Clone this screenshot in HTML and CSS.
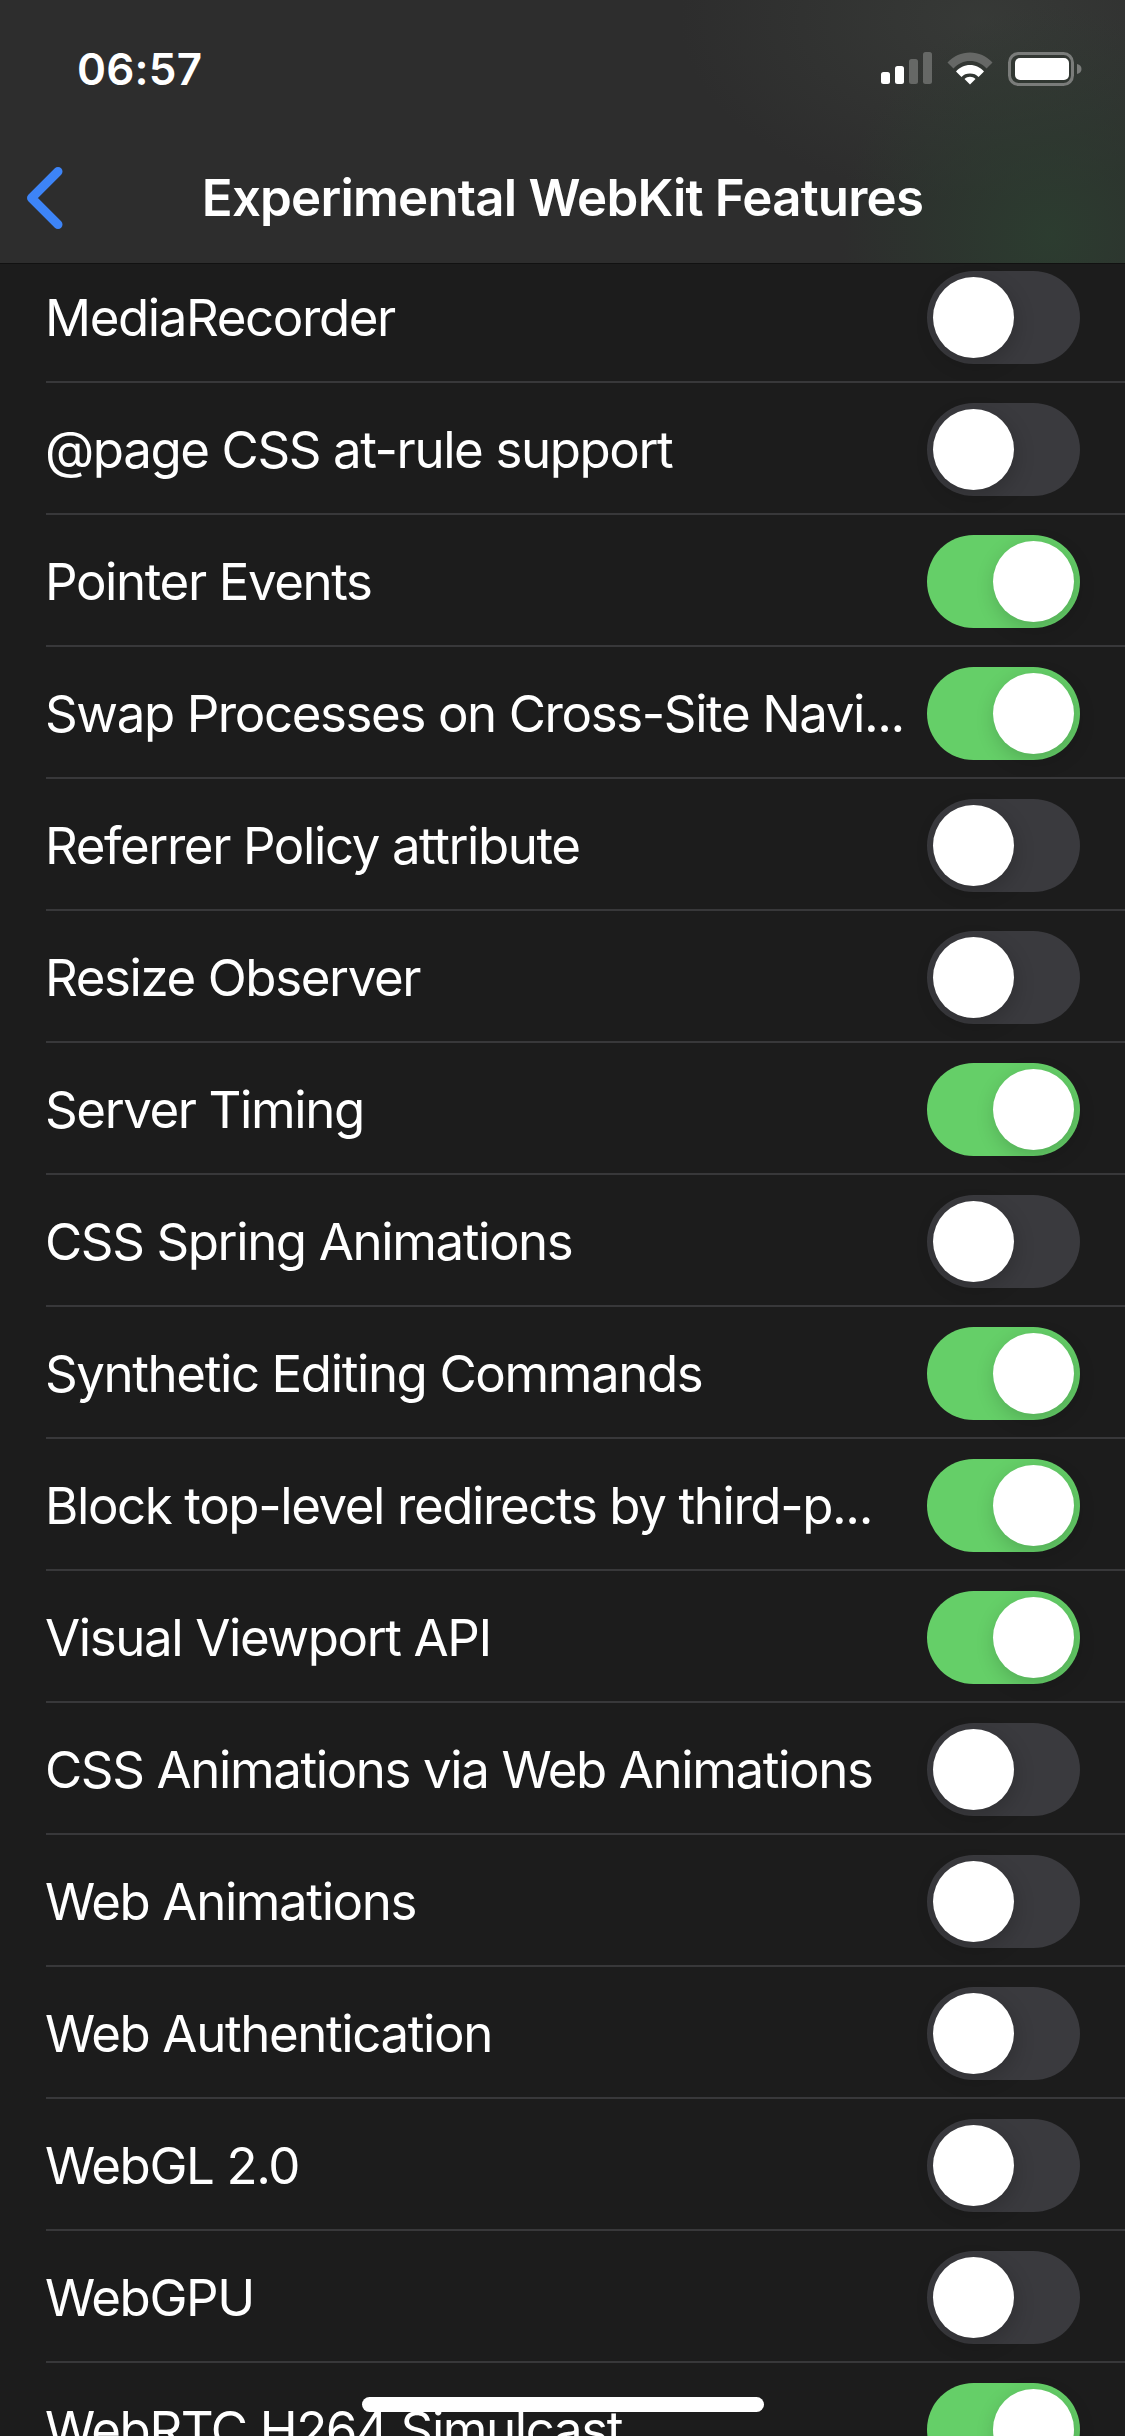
FILE: index.html
```html
<!DOCTYPE html>
<html lang="en">
<head>
<meta charset="utf-8">
<title>Experimental WebKit Features</title>
<link rel="stylesheet" href="styles.css">
</head>
<body>
<div class="screen">
  <header class="header">
    <div class="status">
      <span class="time">06:57</span>
      <div class="status-icons">
        <svg class="signal" width="51" height="32" viewBox="0 0 51 32">
          <rect x="0" y="20" width="9" height="12" rx="2.5" fill="#fff"/>
          <rect x="14" y="14" width="9" height="18" rx="2.5" fill="#fff"/>
          <rect x="28" y="7" width="9" height="25" rx="2.5" fill="#666866"/>
          <rect x="42" y="0" width="9" height="32" rx="2.5" fill="#666866"/>
        </svg>
        <svg class="wifi" width="46" height="33" viewBox="0 0 46 33">
          <path d="M0.5 10.5C6.5 4 14.5 0.5 23 0.5s16.500 3.500 22.500 10l-6 6C35 11.500 29.500 9 23 9S11 11.500 6.500 16.500Z" fill="#666866"/>
          <path d="M9 19.500C12.500 15.500 17.500 13 23 13s10.500 2.500 14 6.500l-5.500 5.500C29.500 22.500 26.500 21.500 23 21.500S16.500 22.500 14.500 25Z" fill="#fff"/>
          <path d="M17.500 27C19 25.500 21 24.800 23 24.800S27 25.500 28.500 27L23 32.500Z" fill="#fff"/>
        </svg>
        <svg class="battery" width="74" height="34" viewBox="0 0 74 34">
          <rect x="1.500" y="1.500" width="63" height="31" rx="9" fill="none" stroke="#7a7c7a" stroke-width="3"/>
          <rect x="7" y="6" width="54" height="22" rx="5" fill="#fff"/>
          <path d="M69 12c3 .6 4.500 2.500 4.500 5s-1.500 4.400-4.500 5Z" fill="#7a7c7a"/>
        </svg>
      </div>
    </div>
    <nav class="nav">
      <svg class="back" width="36" height="64" viewBox="0 0 36 64">
        <path d="M31 5.500 4.500 32 31 58.500" fill="none" stroke="#3d84f7" stroke-width="9" stroke-linecap="round" stroke-linejoin="round"/>
      </svg>
      <h1 class="title">Experimental WebKit Features</h1>
    </nav>
  </header>
  <ul class="list">
    <li class="row"><span class="label">MediaRecorder</span><span class="switch"></span></li>
    <li class="row"><span class="label">@page CSS at-rule support</span><span class="switch"></span></li>
    <li class="row"><span class="label">Pointer Events</span><span class="switch on"></span></li>
    <li class="row"><span class="label">Swap Processes on Cross-Site Navi...</span><span class="switch on"></span></li>
    <li class="row"><span class="label">Referrer Policy attribute</span><span class="switch"></span></li>
    <li class="row"><span class="label">Resize Observer</span><span class="switch"></span></li>
    <li class="row"><span class="label">Server Timing</span><span class="switch on"></span></li>
    <li class="row"><span class="label">CSS Spring Animations</span><span class="switch"></span></li>
    <li class="row"><span class="label">Synthetic Editing Commands</span><span class="switch on"></span></li>
    <li class="row"><span class="label">Block top-level redirects by third-p...</span><span class="switch on"></span></li>
    <li class="row"><span class="label">Visual Viewport API</span><span class="switch on"></span></li>
    <li class="row"><span class="label">CSS Animations via Web Animations</span><span class="switch"></span></li>
    <li class="row"><span class="label">Web Animations</span><span class="switch"></span></li>
    <li class="row"><span class="label">Web Authentication</span><span class="switch"></span></li>
    <li class="row"><span class="label">WebGL 2.0</span><span class="switch"></span></li>
    <li class="row"><span class="label">WebGPU</span><span class="switch"></span></li>
    <li class="row"><span class="label">WebRTC H264 Simulcast</span><span class="switch on"></span></li>
  </ul>
  <div class="home-indicator"></div>
</div>
</body>
</html>
```
FILE: styles.css
```css
* { box-sizing: border-box; }
html, body { margin: 0; padding: 0; background: #1c1c1c; }
.screen {
  position: relative;
  width: 1125px;
  height: 2436px;
  overflow: hidden;
  background: #1c1c1c;
  color: #fff;
  font-family: Inter, "Liberation Sans", sans-serif;
}
.header {
  position: relative;
  z-index: 2;
  height: 264px;
  display: flex;
  flex-direction: column;
  background:
    radial-gradient(ellipse 210px 230px at 1050px 235px, rgba(44,62,48,.9), rgba(44,62,48,0) 100%),
    radial-gradient(ellipse 300px 180px at 980px 20px, rgba(60,64,60,.65), rgba(60,64,60,0) 100%),
    #2d2d2d;
  border-bottom: 1px solid #111;
}
.status {
  height: 132px;
  padding: 47px 43px 0 77px;
  display: flex;
  justify-content: space-between;
  align-items: flex-start;
}
.time {
  font-size: 44px;
  font-weight: 600;
  line-height: 44px;
  letter-spacing: 0.2px;
}
.status-icons {
  display: flex;
  align-items: flex-start;
  gap: 15px;
  padding-top: 5px;
}
.nav {
  position: relative;
  flex: 1;
  display: flex;
  align-items: center;
  justify-content: center;
}
.back {
  position: absolute;
  left: 27px;
  top: 34px;
}
.title {
  margin: 0;
  font-size: 51px;
  font-weight: 600;
  line-height: 60px;
  letter-spacing: -0.8px;
  white-space: nowrap;
}
.list {
  list-style: none;
  margin: -13px 0 0;
  padding: 0;
}
.row {
  position: relative;
  height: 132px;
  padding: 1px 45px 0 45px;
  display: flex;
  align-items: center;
  justify-content: space-between;
}
.row::after {
  content: "";
  position: absolute;
  left: 46px;
  right: 0;
  bottom: 0;
  height: 2px;
  background: #38383a;
}
.label {
  font-size: 51px;
  font-weight: 400;
  letter-spacing: -1.4px;
  line-height: 60px;
  white-space: nowrap;
}
.switch {
  position: relative;
  flex: none;
  width: 153px;
  height: 93px;
  border-radius: 47px;
  background: #3a3a3e;
}
.switch::after {
  content: "";
  position: absolute;
  left: 6px;
  top: 6px;
  width: 81px;
  height: 81px;
  border-radius: 50%;
  background: #fff;
  box-shadow: 2px 6px 20px rgba(0, 0, 0, .18);
}
.switch.on { background: #65cf68; }
.switch.on::after { left: 66px; }
.home-indicator {
  position: absolute;
  left: 362px;
  top: 2397px;
  width: 402px;
  height: 15px;
  border-radius: 8px;
  background: #fff;
  z-index: 3;
}
```
